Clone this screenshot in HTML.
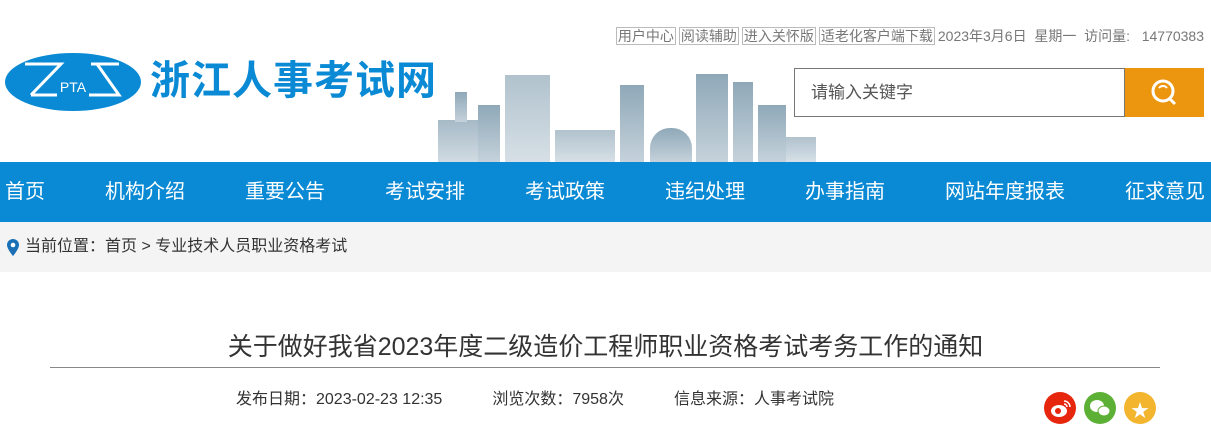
<!DOCTYPE html>
<html><head><meta charset="utf-8"><style>
*{margin:0;padding:0;box-sizing:border-box}
body{width:1211px;height:438px;overflow:hidden;background:#fff;font-family:"Liberation Sans","Noto Sans CJK SC",sans-serif;position:relative}
.a{position:absolute}
.tb span.b{border:1px solid #bbb;padding:0 1px;margin-right:3px}
.tb{top:26px;right:7px;font-size:14px;color:#777;line-height:20px;white-space:nowrap}
.nav{top:162px;left:0;width:1211px;height:60px;background:#0a8ad4}
.nav span{position:absolute;top:18px;font-size:20px;color:#fff;line-height:24px}
.bc{top:222px;left:0;width:1211px;height:50px;background:#f4f4f4;font-size:16px;color:#333;line-height:50px;padding-left:25px}
.sk{background:linear-gradient(#8fa8b8,#c5d2db)}
</style></head><body>
<div class="a tb"><span class="b">用户中心</span><span class="b">阅读辅助</span><span class="b">进入关怀版</span><span class="b">适老化客户端下载</span>2023年3月6日&nbsp; 星期一&nbsp; 访问量:&nbsp;&nbsp; 14770383</div>
<svg class="a" style="left:5px;top:52px" width="136" height="60" viewBox="0 0 136 60">
<ellipse cx="68" cy="30" rx="68" ry="29" fill="#0a8ad4"/>
<path d="M20 12H56L26 43M26 43H52" stroke="#fff" stroke-width="3" fill="none"/>
<path d="M86 12H114M92 12L114 43H84" stroke="#fff" stroke-width="3" fill="none"/>
<text x="68" y="40" fill="#fff" font-size="14" text-anchor="middle" font-family="Liberation Sans">PTA</text>
</svg>
<div class="a" style="left:150px;top:56px;font-size:40px;font-weight:bold;color:#0a8ad4;letter-spacing:1px;line-height:50px">浙江人事考试网</div>
<div class="a sk" style="left:438px;top:120px;width:40px;height:42px;opacity:.8"></div>
<div class="a sk" style="left:455px;top:92px;width:12px;height:30px"></div>
<div class="a sk" style="left:478px;top:105px;width:22px;height:57px"></div>
<div class="a sk" style="left:505px;top:75px;width:45px;height:87px;opacity:.7"></div>
<div class="a sk" style="left:555px;top:130px;width:60px;height:32px;opacity:.7"></div>
<div class="a sk" style="left:620px;top:85px;width:24px;height:77px"></div>
<div class="a sk" style="left:650px;top:128px;width:42px;height:34px;border-radius:20px 20px 0 0"></div>
<div class="a sk" style="left:696px;top:74px;width:32px;height:88px"></div>
<div class="a sk" style="left:733px;top:82px;width:20px;height:80px"></div>
<div class="a sk" style="left:758px;top:105px;width:28px;height:57px"></div>
<div class="a sk" style="left:786px;top:137px;width:30px;height:25px;opacity:.7"></div>
<div class="a" style="left:794px;top:68px;width:331px;height:49px;border:1px solid #777;font-size:17px;color:#555;line-height:47px;padding-left:16px">请输入关键字</div>
<div class="a" style="left:1125px;top:68px;width:79px;height:49px;background:#ec950f">
<svg width="79" height="49"><circle cx="38" cy="23" r="10" stroke="#fff" stroke-width="3" fill="none"/><path d="M45 31l5 5" stroke="#fff" stroke-width="3"/><path d="M34 20a5 5 0 0 1 8 0" stroke="#fff" stroke-width="2" fill="none"/></svg></div>
<div class="a nav"><span style="left:5px">首页</span><span style="left:105px">机构介绍</span><span style="left:245px">重要公告</span><span style="left:385px">考试安排</span><span style="left:525px">考试政策</span><span style="left:665px">违纪处理</span><span style="left:805px">办事指南</span><span style="left:945px">网站年度报表</span><span style="left:1125px">征求意见</span></div>
<div class="a bc">当前位置：首页 &gt; 专业技术人员职业资格考试</div>
<svg class="a" style="left:6px;top:238px" width="14" height="19"><path d="M7 1a6 6 0 0 1 6 6c0 4-6 11-6 11S1 11 1 7a6 6 0 0 1 6-6z" fill="#1a6fb5"/><circle cx="7" cy="7" r="2.3" fill="#fff"/></svg>
<div class="a" style="left:0;width:1211px;top:329px;text-align:center;font-size:25px;color:#333;line-height:36px">关于做好我省2023年度二级造价工程师职业资格考试考务工作的通知</div>
<div class="a" style="left:50px;top:367px;width:1110px;height:1px;background:#888"></div>
<div class="a" style="left:236px;top:389px;font-size:16px;color:#333;line-height:22px;white-space:nowrap">发布日期：2023-02-23 12:35<span style="margin-left:50px">浏览次数：7958次</span><span style="margin-left:50px">信息来源：人事考试院</span></div>
<div class="a" style="left:1044px;top:392px;width:32px;height:32px;border-radius:50%;background:#e6270e"></div>
<div class="a" style="left:1084px;top:392px;width:32px;height:32px;border-radius:50%;background:#5db036"></div>
<div class="a" style="left:1124px;top:392px;width:32px;height:32px;border-radius:50%;background:#f3b52e"></div>
<svg class="a" style="left:1044px;top:392px" width="32" height="32"><ellipse cx="15" cy="19" rx="8" ry="6" fill="#fff"/><circle cx="14" cy="19" r="3" fill="#e6270e"/><path d="M20 9a6 6 0 0 1 6 6M20 12a3 3 0 0 1 3 3" stroke="#fff" stroke-width="1.5" fill="none"/></svg>
<svg class="a" style="left:1084px;top:392px" width="32" height="32"><ellipse cx="13" cy="14" rx="7" ry="6" fill="#fff"/><ellipse cx="20" cy="19" rx="6" ry="5" fill="#fff" stroke="#5db036"/></svg>
<div class="a" style="left:1131px;top:397px;color:#fff;font-size:18px">★</div>
</body></html>
